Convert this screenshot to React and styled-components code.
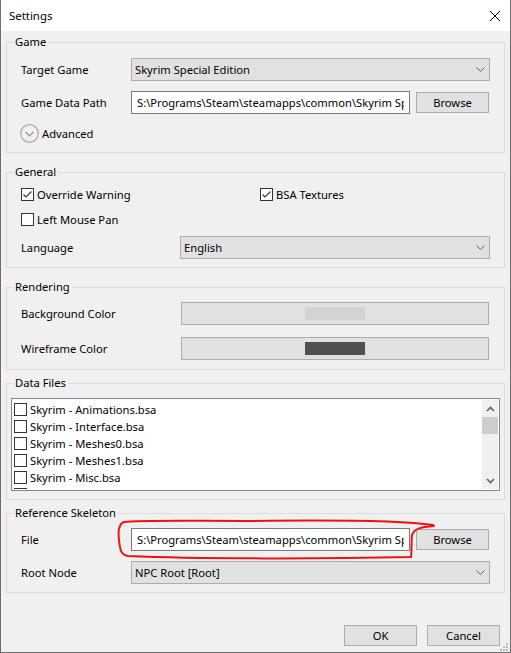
import React from "react";
import styled, { createGlobalStyle } from "styled-components";

const GlobalStyle = createGlobalStyle`
  html, body { margin: 0; padding: 0; background: #f0f0f0; }
  body {
    font-family: "Noto Sans", "Segoe UI", sans-serif;
    font-size: 11.2px;
    color: #000;
  }
  * { box-sizing: border-box; }
`;

const Window = styled.div`
  position: relative;
  width: 511px;
  height: 653px;
  border: 1px solid #6f6f6f;
  border-top: none;
  background: #f0f0f0;
  display: flex;
  flex-direction: column;
  overflow: hidden;
`;

const TitleBar = styled.div`
  height: 31px;
  flex: none;
  background: #fff;
  display: flex;
  align-items: center;
  justify-content: space-between;
  padding: 0 10px 0 8px;
  font-size: 11.4px;
`;

const Body = styled.div`
  flex: 1;
  display: flex;
  flex-direction: column;
  padding: 0 5px;
`;

const Group = styled.div`
  border: 1px solid #dcdcdc;
  margin-top: ${(p) => p.$mt}px;
`;

const Legend = styled.div`
  width: fit-content;
  margin: -9px 0 0 6px;
  padding: 0 2px;
  line-height: 16px;
  background: #f0f0f0;
`;

const GroupBody = styled.div`
  display: flex;
  flex-direction: column;
  gap: ${(p) => p.$gap || 10}px;
  padding: ${(p) => p.$pt}px ${(p) => p.$px ?? 14}px ${(p) => p.$pb}px;
`;

const Row = styled.div`
  display: grid;
  grid-template-columns: ${(p) => p.$label}px 1fr;
  align-items: center;
  height: 23px;
`;

const Label = styled.span`
  white-space: nowrap;
  margin-top: -1px;
`;

const Combo = styled.div`
  height: 23px;
  display: flex;
  align-items: center;
  justify-content: space-between;
  padding: 0 4px 0 3px;
  background: #e1e1e1;
  border: 1px solid #adadad;
  white-space: nowrap;
`;

const PathLine = styled.div`
  display: flex;
  align-items: center;
  gap: 6px;
  padding-right: 1px;
`;

const TextBox = styled.input`
  flex: 1;
  min-width: 0;
  height: 23px;
  border: 1px solid #7a7a7a;
  background: #fff;
  padding: 0 5px;
  font: inherit;
  color: #000;
  outline: none;
`;

const Button = styled.button`
  width: 73px;
  height: 21px;
  flex: none;
  border: 1px solid #adadad;
  background: #e1e1e1;
  font: inherit;
  color: #000;
  padding: 0;
`;

const Advanced = styled.div`
  display: flex;
  align-items: center;
  gap: 3px;
  height: 19px;
  margin-left: -1px;
`;

const CheckGrid = styled.div`
  display: grid;
  grid-template-columns: 239px 1fr;
  height: 17px;
  align-items: center;
`;

const Check = styled.label`
  display: flex;
  align-items: center;
  gap: 3px;
  white-space: nowrap;
`;

const Box = styled.span`
  width: 13px;
  height: 13px;
  flex: none;
  border: 1px solid #333;
  background: #fff;
  display: flex;
  align-items: center;
  justify-content: center;
`;

const ColorButton = styled.div`
  height: 23px;
  margin: 0 1px;
  border: 1px solid #adadad;
  background: #e1e1e1;
  display: flex;
  align-items: center;
  justify-content: center;
`;

const Swatch = styled.span`
  width: 60px;
  height: 13px;
  background: ${(p) => p.$color};
`;

const ListBox = styled.div`
  height: 93px;
  border: 1px solid #828790;
  background: #fff;
  padding: 1px;
  display: flex;
`;

const Items = styled.div`
  flex: 1;
  overflow: hidden;
  padding: 1px 0 0 1px;
`;

const Item = styled.div`
  height: 17px;
  display: flex;
  align-items: center;
  gap: 3px;
  white-space: nowrap;
`;

const ScrollBar = styled.div`
  width: 16px;
  background: #f0f0f0;
  display: flex;
  flex-direction: column;
`;

const ArrowBtn = styled.div`
  height: 17px;
  display: flex;
  align-items: center;
  justify-content: center;
`;

const Thumb = styled.div`
  height: 17px;
  background: #cdcdcd;
`;

const Track = styled.div`
  flex: 1;
`;

const Footer = styled.div`
  margin-top: auto;
  display: flex;
  justify-content: flex-end;
  gap: 10px;
  padding: 0 5px 6px 0;
`;

const Overlay = styled.svg`
  position: absolute;
  left: -1px;
  top: 0;
  pointer-events: none;
`;

const Chevron = () => (
  <svg width="9" height="5" viewBox="0 0 9 5">
    <path d="M0.5 0.5 L4.5 4.5 L8.5 0.5" fill="none" stroke="#606060" strokeWidth="1" />
  </svg>
);

const CheckBox = ({ checked }) => (
  <Box>
    {checked && (
      <svg width="11" height="11" viewBox="0 0 11 11">
        <path d="M1.5 5.5 L4 8 L9.5 2.5" fill="none" stroke="#333" strokeWidth="1.1" />
      </svg>
    )}
  </Box>
);

const ComboBox = ({ value }) => (
  <Combo>
    <span>{value}</span>
    <Chevron />
  </Combo>
);

const dataFiles = [
  "Skyrim - Animations.bsa",
  "Skyrim - Interface.bsa",
  "Skyrim - Meshes0.bsa",
  "Skyrim - Meshes1.bsa",
  "Skyrim - Misc.bsa",
  "Skyrim - Shaders.bsa",
];

const gamePath = "S:\\Programs\\Steam\\steamapps\\common\\Skyrim Special Edition\\Data";
const skelPath = "S:\\Programs\\Steam\\steamapps\\common\\Skyrim Special Edition\\Data\\meshes\\actors\\character\\character assets\\skeleton.nif";

export default function App() {
  return (
    <>
      <GlobalStyle />
      <Window>
        <TitleBar>
          <span>Settings</span>
          <svg width="10" height="10" viewBox="0 0 10 10">
            <path d="M0 0 L10 10 M10 0 L0 10" stroke="#000" strokeWidth="1" />
          </svg>
        </TitleBar>
        <Body>
          <Group $mt={11}>
            <Legend>Game</Legend>
            <GroupBody $pt={8} $pb={9}>
              <Row $label={110}>
                <Label>Target Game</Label>
                <ComboBox value="Skyrim Special Edition" />
              </Row>
              <Row $label={110}>
                <Label>Game Data Path</Label>
                <PathLine>
                  <TextBox readOnly value={gamePath} />
                  <Button>Browse</Button>
                </PathLine>
              </Row>
              <Advanced>
                <svg width="19" height="19" viewBox="0 0 19 19">
                  <circle cx="9.5" cy="9.5" r="8.8" fill="none" stroke="#a8a8a8" strokeWidth="1.2" />
                  <path d="M5.5 7.8 L9.5 11.8 L13.5 7.8" fill="none" stroke="#909090" strokeWidth="1.2" />
                </svg>
                <span>Advanced</span>
              </Advanced>
            </GroupBody>
          </Group>

          <Group $mt={19}>
            <Legend>General</Legend>
            <GroupBody $pt={6} $pb={8} $gap={8}>
              <CheckGrid>
                <Check>
                  <CheckBox checked />
                  Override Warning
                </Check>
                <Check>
                  <CheckBox checked />
                  BSA Textures
                </Check>
              </CheckGrid>
              <CheckGrid>
                <Check>
                  <CheckBox />
                  Left Mouse Pan
                </Check>
              </CheckGrid>
              <Row $label={159}>
                <Label>Language</Label>
                <ComboBox value="English" />
              </Row>
            </GroupBody>
          </Group>

          <Group $mt={19}>
            <Legend>Rendering</Legend>
            <GroupBody $pt={7} $pb={9} $gap={12}>
              <Row $label={159}>
                <Label>Background Color</Label>
                <ColorButton>
                  <Swatch $color="#d3d3d3" />
                </ColorButton>
              </Row>
              <Row $label={159}>
                <Label>Wireframe Color</Label>
                <ColorButton>
                  <Swatch $color="#505050" />
                </ColorButton>
              </Row>
            </GroupBody>
          </Group>

          <Group $mt={13}>
            <Legend>Data Files</Legend>
            <GroupBody $pt={7} $pb={8} $px={4}>
              <ListBox>
                <Items>
                  {dataFiles.map((f) => (
                    <Item key={f}>
                      <CheckBox />
                      <span>{f}</span>
                    </Item>
                  ))}
                </Items>
                <ScrollBar>
                  <ArrowBtn>
                    <svg width="9" height="6" viewBox="0 0 9 6">
                      <path d="M1 5 L4.5 1.5 L8 5" fill="none" stroke="#606060" strokeWidth="1.6" />
                    </svg>
                  </ArrowBtn>
                  <Thumb />
                  <Track />
                  <ArrowBtn>
                    <svg width="9" height="6" viewBox="0 0 9 6">
                      <path d="M1 1 L4.5 4.5 L8 1" fill="none" stroke="#606060" strokeWidth="1.6" />
                    </svg>
                  </ArrowBtn>
                </ScrollBar>
              </ListBox>
            </GroupBody>
          </Group>

          <Group $mt={13}>
            <Legend>Reference Skeleton</Legend>
            <GroupBody $pt={7} $pb={8}>
              <Row $label={110}>
                <Label>File</Label>
                <PathLine>
                  <TextBox readOnly value={skelPath} />
                  <Button>Browse</Button>
                </PathLine>
              </Row>
              <Row $label={110}>
                <Label>Root Node</Label>
                <ComboBox value="NPC Root [Root]" />
              </Row>
            </GroupBody>
          </Group>

          <Footer>
            <Button>OK</Button>
            <Button>Cancel</Button>
          </Footer>
        </Body>

        <Overlay width="511" height="653" viewBox="0 0 511 653">
          <path
            d="M433 525 C405 521 330 520 250 521 C190 521 140 520 124 522 C118 524 118 532 119 540 C120 550 121 555 128 556 C200 559 320 559 411 557 C412 550 411 542 412 535 C414 529 420 527 434 526"
            fill="none"
            stroke="#ee1111"
            strokeWidth="2"
            strokeLinecap="round"
          />
          <g fill="#b9b9b9">
            <rect x="506" y="643" width="2" height="2" />
            <rect x="503" y="646" width="2" height="2" />
            <rect x="506" y="646" width="2" height="2" />
            <rect x="500" y="649" width="2" height="2" />
            <rect x="503" y="649" width="2" height="2" />
            <rect x="506" y="649" width="2" height="2" />
          </g>
        </Overlay>
      </Window>
    </>
  );
}
